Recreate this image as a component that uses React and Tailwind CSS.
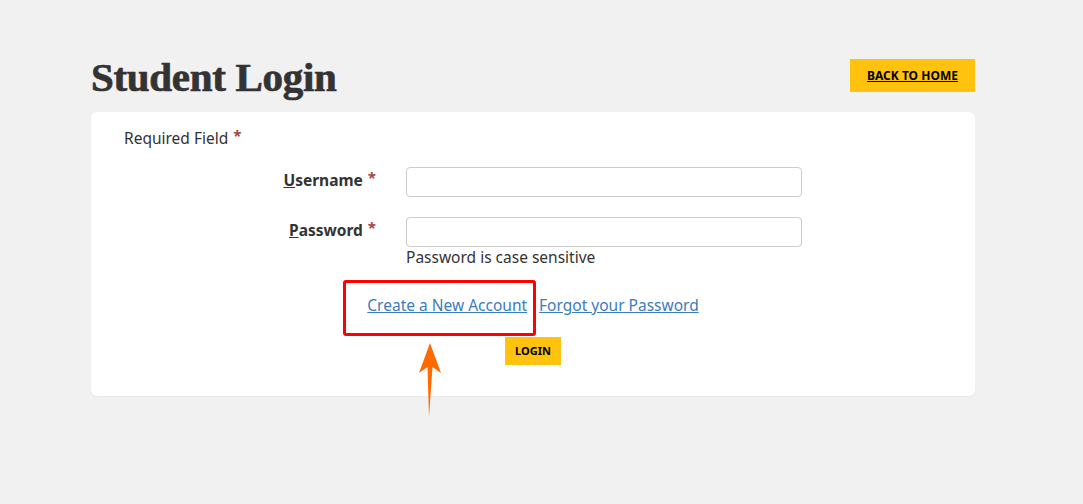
import React from "react";

const body = { fontFamily: "'Noto Sans', 'Open Sans', sans-serif" };

const Star = () => (
  <span className="ml-[5px] text-[#a94442] text-[15px] font-bold leading-none relative top-[-3px]">*</span>
);

const App = () => {
  return (
    <div className="min-h-[504px] w-full bg-[#f1f1f1] text-[#333]" style={body}>
      <div className="ml-[91px] w-[884px] pt-[53px]">
        <div className="flex items-start justify-between h-[59px]">
          <h1
            className="text-[41px] leading-[48px] font-bold text-[#333] tracking-[-0.3px] [-webkit-text-stroke:0.7px_#333]"
            style={{ fontFamily: "'Liberation Serif', serif" }}
          >
            Student Login
          </h1>
          <a
            href="#"
            className="mt-[6px] flex h-[33px] w-[125px] items-center justify-center bg-[#ffc20e] text-[12px] font-bold text-black underline"
          >
            BACK TO HOME
          </a>
        </div>

        <div className="relative rounded-md bg-white pt-[16px] pb-[31px] shadow-[0_1px_2px_rgba(0,0,0,0.04)]">
          <p className="pl-[33px] text-[15.5px] leading-[20px]">
            Required Field<Star />
          </p>

          <div className="mt-[19px] grid grid-cols-[285px_396px] gap-x-[30px] gap-y-[20px] items-start">
            <label className="flex h-[30px] items-center justify-end text-[15.5px] font-bold pb-[3px]">
              <span><span className="underline">U</span>sername</span>
              <Star />
            </label>
            <input className="h-[30px] rounded border border-[#cccccc] bg-white px-2" />

            <label className="flex h-[30px] items-center justify-end text-[15.5px] font-bold pb-[3px]">
              <span><span className="underline">P</span>assword</span>
              <Star />
            </label>
            <div>
              <input type="password" className="h-[30px] w-full rounded border border-[#cccccc] bg-white px-2" />
              <p className="mt-0 text-[15.5px] leading-[20px]">Password is case sensitive</p>
            </div>
          </div>

          <div className="relative mt-[28px] flex justify-center gap-[12px] text-[15.5px] leading-[20px] text-[#3b7bbf]">
            <a href="#" className="underline">Create a New Account</a>
            <a href="#" className="underline">Forgot your Password</a>
          </div>

          <div className="mt-[22px] flex justify-center">
            <button className="h-[28px] w-[56px] bg-[#ffc20e] text-[11px] font-bold text-black">LOGIN</button>
          </div>

          {/* annotation */}
          <div className="absolute left-[252px] top-[168px] h-[56px] w-[193px] rounded-[3px] border-[3px] border-[#ff0000]" />
          <svg className="absolute left-[326px] top-[230px]" width="26" height="76" viewBox="0 0 26 76">
            <path d="M13 1 L24 31 L15.5 25 L12 75 L10.5 25 L2 31 Z" fill="#ff6a00" />
          </svg>
        </div>
      </div>
    </div>
  );
};

export default App;
